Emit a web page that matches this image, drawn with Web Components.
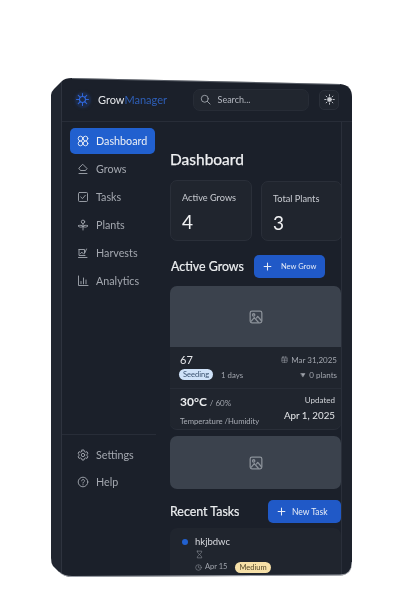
<!DOCTYPE html>
<html>
<head>
<meta charset="utf-8">
<title>GrowManager</title>
<style>
  html, body { margin: 0; background: #fff; }
  body { font-family: Lato, "Noto Sans", sans-serif; }
</style>
</head>
<body>
<gm-app>
  <gm-header slot="header"></gm-header>
  <gm-sidebar slot="sidebar">
    <gm-nav-item icon="dashboard" active>Dashboard</gm-nav-item>
    <gm-nav-item icon="grows">Grows</gm-nav-item>
    <gm-nav-item icon="tasks">Tasks</gm-nav-item>
    <gm-nav-item icon="plants">Plants</gm-nav-item>
    <gm-nav-item icon="harvests">Harvests</gm-nav-item>
    <gm-nav-item icon="analytics">Analytics</gm-nav-item>
    <gm-nav-item slot="footer" icon="settings">Settings</gm-nav-item>
    <gm-nav-item slot="footer" icon="help">Help</gm-nav-item>
  </gm-sidebar>
  <gm-dashboard slot="main"></gm-dashboard>
</gm-app>

<script>
const ICONS = {
  dashboard: '<circle cx="3.500" cy="3.500" r="2.300"/><circle cx="8.500" cy="3.500" r="2.300"/><circle cx="3.500" cy="8.500" r="2.300"/><circle cx="8.500" cy="8.500" r="2.300"/>',
  grows: '<path d="M6 1.500 10 5.500 8.500 7.500H3.500L2 5.500Z"/><path d="M2 10.500H10"/>',
  tasks: '<rect x="1.500" y="1.500" width="9" height="9" rx="1"/><path d="M3.800 6 5.500 7.600 8.300 4.300"/>',
  plants: '<path d="M6 11V4.500"/><circle cx="6" cy="2.800" r="1.700"/><path d="M6 7.500C5 6 3 6 1 6.800 2.500 8.500 4.500 8.500 6 7.500Z"/><path d="M6 7.500C7 6 9 6 11 6.800 9.500 8.500 7.500 8.500 6 7.500Z"/>',
  harvests: '<path d="M2 2.500H7.500V6.500L9.500 2"/><path d="M2 2.500V8.500H8"/><path d="M1.500 10.500H10"/><path d="M3.500 6.500 5 5.200 6.500 7"/>',
  analytics: '<path d="M1.500 1V10.500H11"/><path d="M4 6.500V8.800M6.500 3V8.800M9 5V8.800"/>',
  settings: '<circle cx="6" cy="6" r="1.700"/><path d="M5 1H7L7.300 2.500 8.600 3.200 10 2.700 11 4.400 9.900 5.400V6.700L11 7.700 10 9.400 8.600 8.900 7.300 9.600 7 11H5L4.700 9.600 3.400 8.900 2 9.400 1 7.700 2.100 6.700V5.400L1 4.400 2 2.700 3.400 3.200 4.700 2.500Z"/>',
  help: '<circle cx="6" cy="6" r="4.800"/><path d="M4.600 4.800C4.700 3 7.500 3.100 7.500 4.800 7.500 6 6 5.900 6 7.100"/><path d="M6 8.600V8.900"/>',
  sun: '<circle cx="6" cy="6" r="2.100" fill="currentColor"/><path d="M6 .8V2.200M6 9.800V11.200M.8 6H2.200M9.800 6H11.200M2.300 2.300 3.300 3.300M8.700 8.700 9.700 9.700M2.300 9.700 3.300 8.700M8.700 3.300 9.700 2.300"/>',
  logo: '<circle cx="6" cy="6" r="2.800"/><path d="M6 .5V3.200M6 8.800V11.500M.5 6H3.200M8.800 6H11.500M2.100 2.100 4 4M8 8 9.900 9.900M2.100 9.900 4 8M8 4 9.900 2.100"/>',
  search: '<circle cx="5.200" cy="5.200" r="3.800"/><path d="M8 8 11 11"/>',
  image: '<rect x="1" y="1" width="10" height="10" rx="1.500"/><circle cx="4" cy="4.200" r="1"/><path d="M2 9.500 4.500 6.500 8 10.500M6.500 6.800 7.500 5.500 10.500 9"/>',
  calendar: '<rect x="1.500" y="2" width="9" height="9" rx="1"/><path d="M1.500 5H10.500M1.500 8H10.500M4 1V3M8 1V3M6 5V11"/>',
  funnel: '<path d="M2 3H10L6 9.500Z" fill="currentColor"/>',
  clock: '<circle cx="6" cy="6" r="4.800"/><path d="M6 3.200V6L7.800 7"/>',
  hourglass: '<path d="M3 1.500H9C9 4 7 5 6 6 7 7 9 8 9 10.500H3C3 8 5 7 6 6 5 5 3 4 3 1.500Z"/>',
  plus: '<path d="M6 1.500V10.500M1.500 6H10.500"/>',
};

function svgIcon(name, size, width) {
  return `<svg width="${size}" height="${size}" viewBox="0 0 12 12" fill="none" stroke="currentColor" stroke-width="${width || 1}" stroke-linecap="round" stroke-linejoin="round" style="display:block;flex:none">${ICONS[name]}</svg>`;
}

class GmElement extends HTMLElement {
  render(html) {
    if (!this.shadowRoot) this.attachShadow({ mode: "open" });
    this.shadowRoot.innerHTML = html;
  }
}

class GmApp extends GmElement {
  connectedCallback() {
    this.render(`<style>
  :host { display: block; width: 408px; height: 612px; padding: 78px 56px 34px 50px; box-sizing: border-box; }
  .frame {
    position: relative;
    width: 302px;
    height: 500px;
    display: flex;
    background: #1b202a;
    color: #d6d9df;
    clip-path: path("M1 17 Q1 14 4 11 L12 3 Q15 0 22 0 L290 6 Q302 7 302 19 L302 484 Q302 497 290 497.5 L22 499 Q14 499 9 494 L3 488 Q1 485 1 480 Z");
    filter: blur(.3px);
  }
  .band { width: 11px; flex: none; background: #20252f; border-right: 1px solid #2e333e; }
  .band.right { border-right: 0; border-left: 1px solid #2a2f3a; background: #1d222c; width: 10px; }
  .column { flex: 1; min-width: 0; display: flex; flex-direction: column; }
  .body { flex: 1; min-height: 0; display: flex; }
  .edge { position: absolute; inset: 0; pointer-events: none; }
</style>
<div class="frame">
  <div class="band"></div>
  <div class="column">
    <slot name="header"></slot>
    <div class="body">
      <slot name="sidebar"></slot>
      <slot name="main"></slot>
      <div class="band right"></div>
    </div>
  </div>
  <svg class="edge" width="302" height="500" fill="none">
    <path d="M302 484 Q302 497 290 497 L22 498.500 Q14 498.500 9 494" stroke="#9a9ea6" stroke-width="1"/>
    <path d="M22 .5 L290 6.500" stroke="#6b7078" stroke-width=".8"/>
  </svg>
</div>`);
  }
}

class GmHeader extends GmElement {
  connectedCallback() {
    this.render(`<style>
  :host { display: flex; align-items: center; height: 44px; flex: none; box-sizing: border-box; padding: 0 13px 0 13px; border-bottom: 1px solid #282d38; }
  .logo { width: 16px; height: 16px; color: #2f66d8; border-radius: 50%; background: #1d2a45; box-shadow: 0 0 3px #1d2a45; display: flex; align-items: center; justify-content: center; }
  .brand { margin-left: 7px; font-size: 11px; color: #e4e6ea; width: 95px; }
  .brand span { color: #2e5fb8; }
  .search { width: 117px; height: 22px; box-sizing: border-box; display: flex; align-items: center; gap: 7px; padding-left: 6px; background: #21262f; border: 1px solid #272c36; border-radius: 7px; font-size: 9px; color: #b4b8c0; }
  .search svg { color: #9ea3ab; }
  .sun { margin-left: 10px; width: 20px; height: 20px; box-sizing: border-box; display: flex; align-items: center; justify-content: center; background: #20252e; border: 1px solid #2a2f39; border-radius: 5px; color: #c8cbd0; }
</style>
<div class="logo">${svgIcon("logo", 13, 1)}</div>
<div class="brand">Grow<span>Manager</span></div>
<div class="search">${svgIcon("search", 11)}<span>Search...</span></div>
<div class="sun">${svgIcon("sun", 11)}</div>`);
  }
}

class GmSidebar extends GmElement {
  connectedCallback() {
    this.render(`<style>
  :host { display: flex; flex-direction: column; width: 108px; flex: none; box-sizing: border-box; padding: 6px 15px 83px 8px; }
  .nav, .footer { display: flex; flex-direction: column; gap: 2px; }
  .footer { gap: 1px; margin-top: auto; margin-right: -1px; margin-left: -8px; padding: 7px 0 0 8px; border-top: 1px solid #282d38; }
</style>
<div class="nav"><slot></slot></div>
<div class="footer"><slot name="footer"></slot></div>`);
  }
}

class GmNavItem extends GmElement {
  connectedCallback() {
    const active = this.hasAttribute("active");
    this.render(`<style>
  :host { display: flex; align-items: center; gap: 7px; height: 26px; box-sizing: border-box; padding: 0 0 1px 7px; border-radius: 5px; font-size: 10.75px; color: ${active ? "#eef1f6" : "#a4a8b0"}; background: ${active ? "#2160cf" : "transparent"}; }
</style>
${svgIcon(this.getAttribute("icon"), 12, .9)}<slot></slot>`);
  }
}

class GmButton extends GmElement {
  connectedCallback() {
    this.render(`<style>
  :host { display: flex; align-items: center; gap: var(--gap, 9px); height: 23px; width: var(--width, 71px); box-sizing: border-box; padding: 0 0 0 9px; border-radius: 5px; background: #2059c7; color: #e8edf7; font-size: var(--size, 7.5px); flex: none; }
</style>
${svgIcon("plus", 9, 1.400)}<slot></slot>`);
  }
}

class GmStatCard extends GmElement {
  connectedCallback() {
    this.render(`<style>
  :host { display: block; box-sizing: border-box; height: 61px; padding: 10px 11px; background: #20252e; border: 1px solid #2a2f39; border-radius: 7px; }
  .label { font-size: 9.2px; line-height: 14px; color: #c9ccd2; white-space: nowrap; }
  .value { font-size: 19px; line-height: 24px; margin-top: 5px; color: #f0f1f3; }
</style>
<div class="label">${this.getAttribute("label")}</div>
<div class="value">${this.getAttribute("value")}</div>`);
  }
}

class GmImageSlot extends GmElement {
  connectedCallback() {
    this.render(`<style>
  :host { display: flex; align-items: center; justify-content: center; background: #3b424d; color: #8b9199; }
</style>
${svgIcon("image", 14, 1.100)}`);
  }
}

class GmGrowCard extends GmElement {
  connectedCallback() {
    this.render(`<style>
  :host { display: block; height: 144px; box-sizing: border-box; background: #20252e; border-radius: 7px; overflow: hidden; border-bottom: 1px solid #2a2f39; color: #d6d9df; }
  gm-image-slot { height: 61px; }
  .top { padding: 5px 4px 8px 10px; border-bottom: 1px solid #282d37; }
  .row { display: flex; align-items: center; justify-content: space-between; }
  .name { font-size: 11px; line-height: 15px; color: #e8e9ec; }
  .meta { display: flex; align-items: center; gap: 3px; font-size: 8px; color: #a2a6ae; }
  .left { display: flex; align-items: center; gap: 8px; font-size: 7.8px; color: #a2a6ae; }
  .badge { height: 11px; line-height: 11px; padding: 0 4px; border-radius: 6px; background: #cfe2f8; color: #38506e; font-size: 7.500px; margin-left: -1px; }
  .row + .row { margin-top: 2px; }
  .bottom { padding: 5px 6px 0 10px; display: flex; justify-content: space-between; }
  .temp { font-size: 12px; line-height: 16px; font-weight: 700; color: #eceef0; }
  .temp small { font-size: 8px; font-weight: 400; color: #a2a6ae; }
  .sub { font-size: 7.7px; line-height: 12px; margin-top: 4px; color: #a9adb5; }
  .upd { text-align: right; font-size: 8px; line-height: 12px; color: #d0d3d8; }
  .date { text-align: right; font-size: 9.8px; line-height: 14px; margin-top: 2px; color: #e4e6e9; }
</style>
<gm-image-slot></gm-image-slot>
<div class="top">
  <div class="row"><span class="name">67</span><span class="meta">${svgIcon("calendar", 7, .8)} Mar 31,2025</span></div>
  <div class="row"><span class="left"><span class="badge">Seeding</span><span>1 days</span></span><span class="meta">${svgIcon("funnel", 6)} 0 plants</span></div>
</div>
<div class="bottom">
  <div><div class="temp">30°C <small>/ 60%</small></div><div class="sub">Temperature /Humidity</div></div>
  <div><div class="upd">Updated</div><div class="date">Apr 1, 2025</div></div>
</div>`);
  }
}

class GmTaskCard extends GmElement {
  connectedCallback() {
    this.render(`<style>
  :host { display: block; box-sizing: border-box; height: 60px; padding: 7px 0 0 12px; background: #20252e; border-radius: 7px 7px 0 0; font-size: 9.5px; color: #d8dadf; }
  .title { display: flex; align-items: center; gap: 7px; line-height: 14px; }
  .dot { width: 6px; height: 6px; border-radius: 50%; background: #2160cf; }
  .icon { margin: 1px 0 0 13px; color: #8c9098; }
  .meta { display: flex; align-items: center; gap: 3px; margin: 2px 0 0 13px; font-size: 7.500px; color: #a2a6ae; line-height: 12px; }
  .badge { margin-left: 5px; height: 11px; line-height: 11px; padding: 0 4px; border-radius: 6px; background: #f6e0a8; color: #55482a; font-size: 7.500px; }
</style>
<div class="title"><span class="dot"></span>hkjbdwc</div>
<div class="icon">${svgIcon("hourglass", 9, .8)}</div>
<div class="meta">${svgIcon("clock", 7, .8)}<span>Apr 15</span><span class="badge">Medium</span></div>`);
  }
}

class GmDashboard extends GmElement {
  connectedCallback() {
    this.render(`<style>
  :host { display: block; flex: 1; min-width: 0; overflow: hidden; padding-top: 26px; box-sizing: border-box; }
  .wrap { width: 171px; }
  h1 { margin: 0; font-size: 15.5px; line-height: 22px; font-weight: 400; -webkit-text-stroke: .25px #f0f1f3; color: #f0f1f3; }
  .stats { display: grid; grid-template-columns: 82px 81px; gap: 9px; margin-top: 10px; }
  .stats gm-stat-card + gm-stat-card { margin-top: 1px; height: 60px; }
  .head { display: flex; align-items: center; height: 23px; }
  .head h2 { margin: 0 0 0 1px; font-size: 12.4px; font-weight: 400; -webkit-text-stroke: .2px #eceef0; color: #eceef0; width: 72px; white-space: nowrap; }
  .grows { margin-top: 14px; }
  .grows gm-button { margin-left: 11px; }
  .tasks { margin-top: 11px; }
  .tasks h2 { margin-left: 0; }
  .tasks gm-button { --width: 73px; --size: 8.500px; --gap: 6px; margin-left: auto; }
  gm-grow-card { margin-top: 8px; }
  .second { display: flex; height: 53px; margin-top: 6px; border-radius: 7px; overflow: hidden; }
  .second gm-image-slot { flex: 1; }
  gm-task-card { margin-top: 5px; }
</style>
<div class="wrap">
  <h1>Dashboard</h1>
  <div class="stats">
    <gm-stat-card label="Active Grows" value="4"></gm-stat-card>
    <gm-stat-card label="Total Plants" value="3"></gm-stat-card>
  </div>
  <div class="head grows"><h2>Active Grows</h2><gm-button>New Grow</gm-button></div>
  <gm-grow-card></gm-grow-card>
  <div class="second"><gm-image-slot></gm-image-slot></div>
  <div class="head tasks"><h2>Recent Tasks</h2><gm-button>New Task</gm-button></div>
  <gm-task-card></gm-task-card>
</div>`);
  }
}

customElements.define("gm-image-slot", GmImageSlot);
customElements.define("gm-button", GmButton);
customElements.define("gm-stat-card", GmStatCard);
customElements.define("gm-grow-card", GmGrowCard);
customElements.define("gm-task-card", GmTaskCard);
customElements.define("gm-nav-item", GmNavItem);
customElements.define("gm-sidebar", GmSidebar);
customElements.define("gm-header", GmHeader);
customElements.define("gm-dashboard", GmDashboard);
customElements.define("gm-app", GmApp);
</script>
</body>
</html>
